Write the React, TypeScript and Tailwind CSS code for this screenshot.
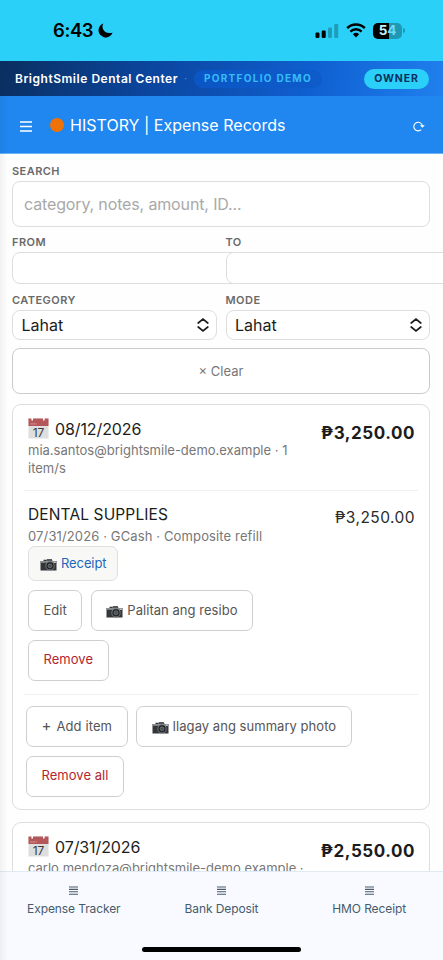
import React from 'react';
import clsx from 'clsx';

const actionClass =
  'flex h-[41px] items-center rounded-[7px] border border-[#cfcfcf] bg-white px-[14.5px] text-[13px] tracking-[0.04px]';
const cardClass = 'rounded-[9px] border border-[#dedede] bg-white px-[11px]';

const tabs = ['Expense Tracker', 'Bank Deposit', 'HMO Receipt'];

const CalendarIcon: React.FC = () => (
  <svg width="21" height="21" viewBox="0 0 21 21" className="shrink-0">
    <rect x="0.5" y="0.5" width="20" height="20" fill="#dedede" />
    <rect x="0.5" y="0.5" width="20" height="7.5" fill="#b5565a" />
    <path d="M4.2 0v2.5M15.8 0v2.5" stroke="#fff" strokeWidth="1.6" />
    <path d="M2.5 5.8h6" stroke="#d99a9c" strokeWidth="1.2" strokeDasharray="1.2 0.6" />
    <text x="10.4" y="18.5" textAnchor="middle" fontSize="12" fill="#3a3a3a" fontFamily="Inter">
      17
    </text>
  </svg>
);

const CameraIcon: React.FC = () => (
  <svg width="17" height="13" viewBox="0 0 17 13" className="mt-[2px] mr-[4px] shrink-0">
    <path d="M0.5 3h3V1.8h2.5V3l1-2h4.5l1 2h4v9.5h-16z" fill="#33373a" />
    <path d="M0.5 3h16v1.8h-16z" fill="#8c8f91" />
    <path d="M7.2 1h4.2l.8 2H6.4z" fill="#55595c" />
    <circle cx="10" cy="7.8" r="4.1" fill="#1f2224" stroke="#7d8184" strokeWidth="0.9" />
    <circle cx="10" cy="7.8" r="2" fill="#4b5054" stroke="#85898c" strokeWidth="0.6" />
    <path d="M13.8 3.8h2v1h-2z" fill="#d5d5d5" />
  </svg>
);

const StatusBar: React.FC = () => (
  <div className="flex h-[61px] shrink-0 items-center bg-[#2ad0f8] pr-[38px] pl-[53px] text-black">
    <span className="text-[18.5px] font-semibold tracking-[-0.4px]">6:43</span>
    <svg width="15" height="15" viewBox="0 0 15 15" className="ml-[5px]">
      <path d="M5.4 0.4A7.2 7.2 0 1 0 14.6 9.4Q13 10.2 11.4 10A6.4 6.4 0 0 1 5.4 0.4z" />
    </svg>
    <svg width="24" height="16" viewBox="0 0 24 16" className="ml-auto">
      <rect x="0.5" y="9.5" width="4" height="5.5" rx="1.2" />
      <rect x="6.7" y="7.5" width="4" height="7.5" rx="1.2" />
      <rect x="13" y="4.5" width="4" height="10.5" rx="1.2" opacity="0.25" />
      <rect x="19.2" y="1" width="4" height="14" rx="1.2" opacity="0.25" />
    </svg>
    <svg width="20" height="15" viewBox="0 0 20 15" className="ml-[7px]">
      <path d="M1.2 5.2a12.6 12.6 0 0 1 17.6 0" fill="none" stroke="#000" strokeWidth="2.5" />
      <path d="M4.4 8.6a8 8 0 0 1 11.2 0" fill="none" stroke="#000" strokeWidth="2.4" />
      <path d="M6.9 11.3a4.5 4.5 0 0 1 6.2 0L10 14.4z" />
    </svg>
    <div className="ml-[7px] flex h-[16px] w-[29px] items-center justify-center rounded-[5px] bg-[linear-gradient(90deg,#000_54%,#1f98b4_54%)] text-[13.5px] font-bold tracking-[-0.2px]">
      <span className="text-[#c9f3fd]">5</span>
      <span className="text-[#6fdcf5]">4</span>
    </div>
    <div className="ml-px h-[5px] w-[2px] rounded-r-full bg-[#1f98b4]" />
  </div>
);

const Label: React.FC<{ children: React.ReactNode }> = ({ children }) => (
  <div className="text-[11px] leading-[14px] font-semibold tracking-[0.45px] text-[#6a6a6a]">
    {children}
  </div>
);

const Select: React.FC<{ label: string }> = ({ label }) => (
  <div className="min-w-0">
    <Label>{label}</Label>
    <div className="mt-[3px] flex h-[30px] items-center justify-between rounded-[8px] border border-[#dedede] bg-white pr-[7px] pl-[8.5px] text-[16px] text-[#1c1c1c]">
      Lahat
      <svg width="12" height="14" viewBox="0 0 12 14" fill="none" stroke="#1c1c1c" strokeWidth="1.7">
        <path d="M1.2 5L6 1.2 10.8 5M1.2 9L6 12.8 10.8 9" strokeLinecap="round" />
      </svg>
    </div>
  </div>
);

const GroupHeader: React.FC<{ date: string; total: string; children: React.ReactNode }> = ({
  date,
  total,
  children,
}) => (
  <div className="flex justify-between px-1 pt-[13px]">
    <div className="w-[278px]">
      <div className="flex h-[21px] items-center gap-[6px] text-[16px] tracking-[-0.1px] text-[#1c1c1c]">
        <CalendarIcon />
        {date}
      </div>
      <div className="mt-[3px] text-[13px] leading-[17.5px] text-[#777]">{children}</div>
    </div>
    <div className="-mr-px pt-[4px] text-[17px] leading-[22px] font-bold tracking-[0.55px] whitespace-nowrap text-[#1c1c1c]">
      {total}
    </div>
  </div>
);

const App: React.FC = () => {
  return (
    <div className="relative flex h-[960px] w-[443px] flex-col overflow-hidden bg-[#fefefe] font-['Inter',sans-serif]">
      <StatusBar />

      <div className="flex h-[35px] shrink-0 items-center bg-[linear-gradient(100deg,#0a2f60_0%,#0b46a0_35%,#0f5fd0_70%,#2080ee_100%)] pr-[14px] pl-[15px]">
        <span className="text-[12px] font-semibold tracking-[0.53px] whitespace-nowrap text-white">
          BrightSmile Dental Center
        </span>
        <span className="ml-[6px] text-[10px] text-[#5c8fd6]">·</span>
        <span className="ml-[7px] flex h-[18px] items-center rounded-full bg-linear-to-r from-[#0b56c4] to-[#0e5bcb] px-[10px] text-[10px] font-bold tracking-[1.3px] whitespace-nowrap text-[#35bdf8]">
          PORTFOLIO DEMO
        </span>
        <span className="ml-auto flex h-[20px] w-[65px] items-center justify-center rounded-full bg-[#2ad0f8] text-[10.5px] font-bold tracking-[0.9px] text-[#0a2f60]">
          OWNER
        </span>
      </div>

      <header className="flex h-[58px] shrink-0 items-center border-b border-[#69b4f6] bg-[#2086f0] pr-[18px] pl-[20px] text-white">
        <svg width="12" height="11" viewBox="0 0 12 11" stroke="#fff" strokeWidth="1.7" className="mt-[3px]">
          <path d="M0 1h12M0 5.5h12M0 10h12" />
        </svg>
        <div className="ml-[18px] h-[14px] w-[14px] rounded-full bg-[#ee7208]" />
        <h1 className="ml-[6px] text-[16px] tracking-[0.02px]">HISTORY | Expense Records</h1>
        <svg
          width="12"
          height="12"
          viewBox="0 0 12 12"
          fill="none"
          stroke="#fff"
          strokeWidth="1.1"
          className="mt-[2px] ml-auto"
        >
          <path d="M8.2 9.6A4.3 4.3 0 1 1 9.4 6" />
          <path d="M7 5.2h4.8L9.4 7.8z" fill="#fff" stroke="none" />
        </svg>
      </header>

      <main className="min-h-0 flex-1 overflow-hidden pt-[10px] pr-[13px] pl-[12px]">
        <Label>SEARCH</Label>
        <div className="mt-[3px] flex h-[46px] items-center rounded-[8px] border border-[#dedede] bg-white px-[11px] text-[16px] tracking-[-0.14px] text-[#a9a9a9]">
          category, notes, amount, ID...
        </div>

        <div className="mt-[8px] grid grid-cols-2 gap-x-[9px]">
          {['FROM', 'TO'].map((name) => (
            <div key={name} className="min-w-0">
              <Label>{name}</Label>
              <div className="mt-[3px] h-[32px] w-[232px] rounded-[8px] border border-[#dedede] bg-white" />
            </div>
          ))}
        </div>

        <div className="mt-[9px] grid grid-cols-2 gap-x-[9px]">
          <Select label="CATEGORY" />
          <Select label="MODE" />
        </div>

        <button className="mt-[8px] flex h-[46px] w-full items-center justify-center rounded-[8px] border border-[#cbcbcb] bg-white pt-px text-[13px] text-[#777]">
          × Clear
        </button>

        <section className={clsx(cardClass, 'mt-[10px] h-[406px]')}>
          <div className="h-[86px] border-b border-[#efefef]">
            <GroupHeader date="08/12/2026" total="₱3,250.00">
              mia.santos@brightsmile-demo.example · 1 item/s
            </GroupHeader>
          </div>

          <div className="h-[204px] border-b border-[#efefef] px-1 pt-[13px]">
            <div className="flex justify-between">
              <div>
                <div className="text-[15.5px] leading-[22px] tracking-[0.13px] text-[#1c1c1c]">
                  DENTAL SUPPLIES
                </div>
                <div className="text-[13px] leading-[20px] tracking-[0.13px] text-[#777]">
                  07/31/2026 · GCash · Composite refill
                </div>
              </div>
              <div className="-mr-px pt-[3px] text-[15.5px] leading-[22px] tracking-[0.45px] text-[#2a2a2a]">
                ₱3,250.00
              </div>
            </div>
            <button className="flex h-[35px] items-center rounded-[7px] border border-[#dfdfdf] bg-[#f8f8f7] px-[11px] text-[13px] tracking-[-0.1px] text-[#1f66b8]">
              <CameraIcon />
              Receipt
            </button>
            <div className="mt-[9px] flex w-[270px] flex-wrap gap-[8.5px]">
              <button className={clsx(actionClass, 'text-[#555]')}>Edit</button>
              <button className={clsx(actionClass, 'text-[#555]')}>
                <CameraIcon />
                Palitan ang resibo
              </button>
              <button className={clsx(actionClass, 'text-[#b3262e]')}>Remove</button>
            </div>
          </div>

          <div className="flex flex-wrap gap-[8.5px] px-[2px] pt-[11px]">
            <button className={clsx(actionClass, 'gap-[5px] text-[#555]')}>
              <span className="text-[15px]">+</span>
              <span className="tracking-[0.1px]">Add item</span>
            </button>
            <button className={clsx(actionClass, 'text-[#555]')}>
              <CameraIcon />
              Ilagay ang summary photo
            </button>
            <button className={clsx(actionClass, 'text-[#b3262e]')}>Remove all</button>
          </div>
        </section>

        <section className={clsx(cardClass, 'mt-[12px] h-[406px]')}>
          <GroupHeader date="07/31/2026" total="₱2,550.00">
            carlo.mendoza@brightsmile-demo.example · 1 item/s
          </GroupHeader>
        </section>
      </main>

      <nav className="h-[89px] shrink-0 border-t border-[#dfeaf4] bg-[#f8faff]">
        <div className="grid grid-cols-3 pt-[14px]">
          {tabs.map((tab) => (
            <div
              key={tab}
              className="flex flex-col items-center text-[12px] tracking-[-0.1px] text-[#475a6b]"
            >
              <svg width="9" height="9" viewBox="0 0 9 9" stroke="#475a6b" strokeWidth="1.1">
                <path d="M0 1h9M0 3.4h9M0 5.8h9M0 8.2h9" />
              </svg>
              <span className="mt-[5px] leading-[18px]">{tab}</span>
            </div>
          ))}
        </div>
        <div className="mx-auto mt-[29px] h-[5px] w-[159px] rounded-full bg-black" />
      </nav>

      <div className="pointer-events-none absolute top-[96px] bottom-0 left-0 w-[8px] bg-linear-to-r from-black/5 to-transparent" />
    </div>
  );
};

export default App;
